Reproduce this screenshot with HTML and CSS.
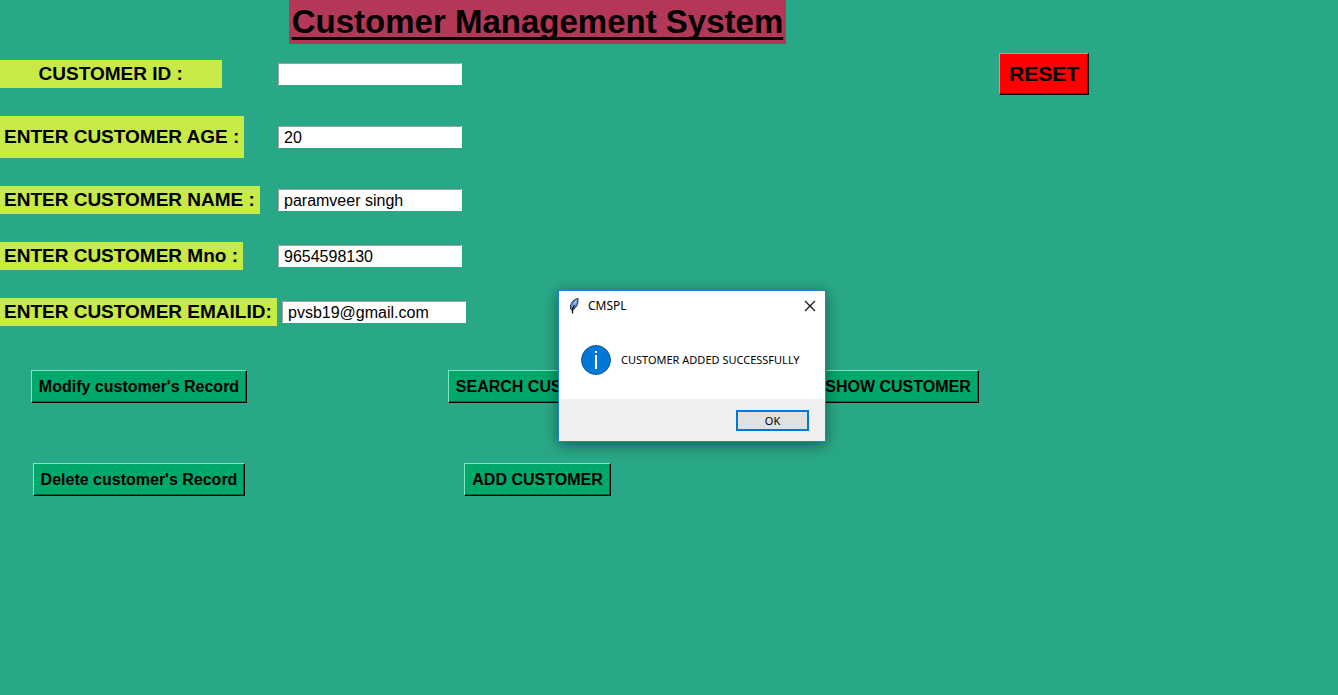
FILE: index.html
```html
<!DOCTYPE html>
<html lang="en">
<head>
<meta charset="utf-8">
<title>Customer Management System</title>
<link rel="stylesheet" href="styles.css">
</head>
<body>
<main class="app">
  <div class="row row-title"><h1 class="title">Customer Management System</h1></div>
  <form class="form">
    <div class="row row-id">
      <label class="label label-id" for="cid">CUSTOMER ID :</label>
      <input class="entry" id="cid" type="text">
      <button class="button reset" type="reset">RESET</button>
    </div>
    <div class="row">
      <label class="label label-tall" for="age">ENTER CUSTOMER AGE :</label>
      <input class="entry" id="age" type="text" value="20">
    </div>
    <div class="row">
      <label class="label" for="name">ENTER CUSTOMER NAME :</label>
      <input class="entry" id="name" type="text" value="paramveer singh">
    </div>
    <div class="row">
      <label class="label" for="mno">ENTER CUSTOMER Mno :</label>
      <input class="entry" id="mno" type="text" value="9654598130">
    </div>
    <div class="row">
      <label class="label" for="email">ENTER CUSTOMER EMAILID:</label>
      <input class="entry entry-email" id="email" type="text" value="pvsb19@gmail.com">
    </div>
  </form>
  <div class="actions">
    <div class="row row-buttons">
      <button class="button" type="button">Modify customer's Record</button>
      <button class="button" type="button">SEARCH CUSTOMER</button>
      <button class="button" type="button">SHOW CUSTOMER</button>
    </div>
    <div class="row row-buttons">
      <button class="button" type="button">Delete customer's Record</button>
      <button class="button" type="button">ADD CUSTOMER</button>
    </div>
  </div>
</main>
<section class="dialog" role="dialog" aria-labelledby="dialog-title">
  <header class="dialog-bar">
    <svg class="feather" viewBox="0 0 12 18" aria-hidden="true">
      <path d="M10 1.500 C6 2 3 5.500 2.500 9 L2.500 12 L4.500 13.500 C8 11 10.500 7 10 1.500Z" fill="#5b93d6" stroke="#29303a" stroke-width="1"/>
      <path d="M8.500 3.500 L5 9.500" stroke="#a9c9f0" stroke-width="1.300" fill="none"/>
      <path d="M6.500 8 L4.500 12 L4.500 16.500" stroke="#000" stroke-width="1.200" fill="none"/>
    </svg>
    <span class="dialog-title" id="dialog-title">CMSPL</span>
    <button class="close" type="button" aria-label="Close">
      <svg class="close-icon" viewBox="0 0 12 12" aria-hidden="true"><path d="M1 1L11 11M11 1L1 11" stroke="#111" stroke-width="1.200" fill="none"/></svg>
    </button>
  </header>
  <div class="dialog-body">
    <svg class="info" viewBox="0 0 30 30" aria-hidden="true">
      <circle cx="15" cy="15" r="14.500" fill="#0078d7" stroke="#17568f"/>
      <path d="M14 6h2v2h-2zM14 10h2v14h-2z" fill="#fff"/>
    </svg>
    <span>CUSTOMER ADDED SUCCESSFULLY</span>
  </div>
  <footer class="dialog-foot"><button class="ok" type="button">OK</button></footer>
</section>
</body>
</html>
```
FILE: styles.css
```css
* { box-sizing: border-box; }
body {
  margin: 0;
  min-height: 100vh;
  background: #29a887;
  color: #000;
  font-family: "Liberation Sans", Arial, sans-serif;
}
.row {
  display: grid;
  grid-template-columns: 278fr 519fr 202fr 339fr;
  align-items: center;
  justify-items: start;
}
.title {
  grid-column: 2;
  justify-self: center;
  margin: 0;
  padding: 0 3px;
  background: #b33756;
  font-size: 33px;
  line-height: 44px;
  white-space: nowrap;
  text-decoration: underline;
  text-decoration-thickness: 3px;
  text-underline-offset: 4px;
  text-decoration-skip-ink: none;
}
.form {
  display: flex;
  flex-direction: column;
  gap: 28px;
  padding-top: 9px;
}
.row-id { margin-bottom: -7px; }
.label {
  padding: 0 5px 0 4px;
  background: #c7ea46;
  font-size: 19px;
  font-weight: bold;
  line-height: 28px;
  white-space: nowrap;
}
.label-id { width: 80%; text-align: center; }
.label-tall { line-height: 42px; }
.entry {
  width: 184px;
  height: 22px;
  padding: 1px 5px 0;
  border: 1px solid #fff;
  border-top-color: #a0a0a0;
  border-left-color: #a0a0a0;
  background: #fff;
  color: #000;
  font: 16px "Liberation Sans", Arial, sans-serif;
}
.entry-email { margin-left: 4px; }
.button {
  padding: 0 7px;
  border: 1px solid #000;
  border-top-color: #80e8b8;
  border-left-color: #80e8b8;
  border-radius: 0;
  background: #00a86b;
  box-shadow: inset -1px -1px #006b44;
  color: #000;
  font: bold 16px/31px "Liberation Sans", Arial, sans-serif;
  white-space: nowrap;
}
.reset {
  grid-column: 4;
  padding: 0 9px;
  border-top-color: #ff8080;
  border-left-color: #ff8080;
  background: #f00;
  box-shadow: inset -1px -1px #a00000;
  font-size: 21px;
  line-height: 40px;
}
.actions {
  display: flex;
  flex-direction: column;
  gap: 60px;
  padding-top: 44px;
}
.row-buttons { justify-items: center; }
.dialog {
  position: absolute;
  top: 290px;
  left: 558px;
  width: 268px;
  border: 1px solid #1883d7;
  background: #fff;
  box-shadow: 0 3px 14px rgba(0, 0, 0, 0.45);
  font: 11px "Noto Sans", sans-serif;
}
.dialog-bar {
  display: flex;
  align-items: center;
  height: 29px;
  padding: 0 9px;
}
.feather { width: 12px; height: 18px; }
.dialog-title { margin-left: 8px; font-size: 12px; }
.close {
  display: flex;
  margin-left: auto;
  padding: 0;
  border: 0;
  background: none;
}
.close-icon { width: 12px; height: 12px; }
.dialog-body {
  display: flex;
  align-items: center;
  gap: 10px;
  height: 79px;
  padding: 0 22px;
  white-space: nowrap;
}
.info { width: 30px; height: 30px; }
.dialog-foot {
  display: flex;
  align-items: center;
  justify-content: flex-end;
  height: 42px;
  padding: 0 16px;
  background: #f0f0f0;
}
.ok {
  width: 73px;
  height: 21px;
  padding: 0;
  border: 2px solid #0078d7;
  background: #e1e1e1;
  color: #000;
  font: 11px "Noto Sans", sans-serif;
}
```
